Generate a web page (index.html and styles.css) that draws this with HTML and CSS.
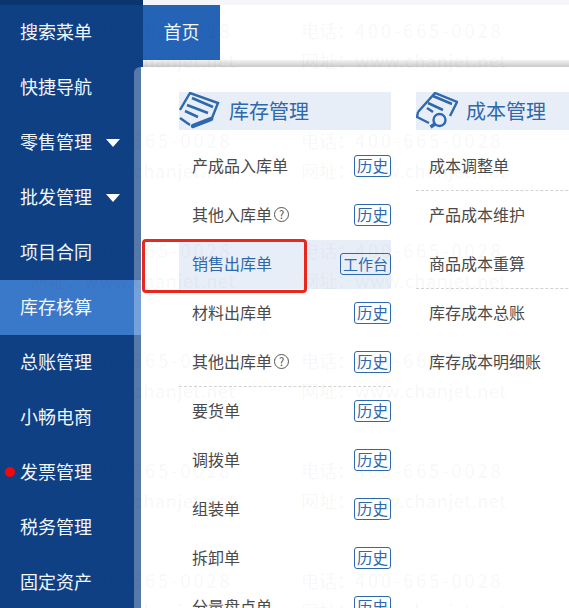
FILE: index.html
```html
<!DOCTYPE html>
<html lang="zh-CN">
<head>
    <meta charset="UTF-8" />
    <title>库存核算</title>
    <link rel="stylesheet" href="styles.css">
</head>
<body>
    <div class="app">
        <aside class="sidebar">
            <div class="nav-item">搜索菜单</div>
            <div class="nav-item">快捷导航</div>
            <div class="nav-item">零售管理<span class="arrow"></span></div>
            <div class="nav-item">批发管理<span class="arrow"></span></div>
            <div class="nav-item">项目合同</div>
            <div class="nav-item active">库存核算</div>
            <div class="nav-item">总账管理</div>
            <div class="nav-item">小畅电商</div>
            <div class="nav-item has-dot">发票管理</div>
            <div class="nav-item">税务管理</div>
            <div class="nav-item">固定资产</div>
        </aside>

        <main class="content">
            <div class="tabs">
                <div class="tab">首页</div>
            </div>
            <div class="tabs-shadow"></div>

            <div class="panel">
                <section class="column">
                    <h2 class="col-title">
                        <svg class="col-icon" width="42" height="38" viewBox="0 0 42 38" fill="none" stroke="#2e68ad" stroke-width="2.4">
                            <path d="M1 18 L11 1 L39 11 L33 26" />
                            <path d="M1 26 L11 33" />
                            <path d="M13 6 L34 15 M8 13 L29 21 M6 19 L19 25" stroke-width="2.6" />
                            <path d="M14 34 L32 27" stroke-width="4.5" stroke-linecap="round" />
                        </svg>
                        库存管理
                    </h2>
                    <div class="row"><span>产成品入库单</span><a class="tag">历史</a></div>
                    <div class="row"><span>其他入库单<i class="help">?</i></span><a class="tag">历史</a></div>
                    <div class="row selected"><span>销售出库单</span><a class="tag">工作台</a></div>
                    <div class="row"><span>材料出库单</span><a class="tag">历史</a></div>
                    <div class="row dashed"><span>其他出库单<i class="help">?</i></span><a class="tag">历史</a></div>
                    <div class="row"><span>要货单</span><a class="tag">历史</a></div>
                    <div class="row"><span>调拨单</span><a class="tag">历史</a></div>
                    <div class="row"><span>组装单</span><a class="tag">历史</a></div>
                    <div class="row"><span>拆卸单</span><a class="tag">历史</a></div>
                    <div class="row"><span>分量盘点单</span><a class="tag">历史</a></div>
                </section>

                <section class="column">
                    <h2 class="col-title">
                        <svg class="col-icon" width="42" height="38" viewBox="0 0 42 38" fill="none" stroke="#2e68ad" stroke-width="2.4">
                            <path d="M2 20 L19 1 L41 10 L34 24" />
                            <path d="M2 20 L1 25 L13 31" />
                            <path d="M17 4 L36 12 M12 11 L27 18 M11 16 L17 20" stroke-width="2.6" />
                            <circle cx="23.5" cy="28" r="6" />
                            <path d="M19 32 L14.5 35" stroke-width="3.5" />
                        </svg>
                        成本管理
                    </h2>
                    <div class="row dashed"><span>成本调整单</span></div>
                    <div class="row"><span>产品成本维护</span></div>
                    <div class="row dashed"><span>商品成本重算</span></div>
                    <div class="row"><span>库存成本总账</span></div>
                    <div class="row"><span>库存成本明细账</span></div>
                </section>
            </div>
        </main>
    </div>

    <!-- annotation box drawn on the screenshot -->
    <div class="callout"></div>

    <div class="watermark">
        <div class="mark"><p>电话&#65306;<b>400-665-0028</b></p><p>网址&#65306;<em>www.chanjet.net</em></p></div>
        <div class="mark"><p>电话&#65306;<b>400-665-0028</b></p><p>网址&#65306;<em>www.chanjet.net</em></p></div>
        <div class="mark"><p>电话&#65306;<b>400-665-0028</b></p><p>网址&#65306;<em>www.chanjet.net</em></p></div>
        <div class="mark"><p>电话&#65306;<b>400-665-0028</b></p><p>网址&#65306;<em>www.chanjet.net</em></p></div>
        <div class="mark"><p>电话&#65306;<b>400-665-0028</b></p><p>网址&#65306;<em>www.chanjet.net</em></p></div>
        <div class="mark"><p>电话&#65306;<b>400-665-0028</b></p><p>网址&#65306;<em>www.chanjet.net</em></p></div>
        <div class="mark"><p>电话&#65306;<b>400-665-0028</b></p><p>网址&#65306;<em>www.chanjet.net</em></p></div>
        <div class="mark"><p>电话&#65306;<b>400-665-0028</b></p><p>网址&#65306;<em>www.chanjet.net</em></p></div>
        <div class="mark"><p>电话&#65306;<b>400-665-0028</b></p><p>网址&#65306;<em>www.chanjet.net</em></p></div>
        <div class="mark"><p>电话&#65306;<b>400-665-0028</b></p><p>网址&#65306;<em>www.chanjet.net</em></p></div>
        <div class="mark"><p>电话&#65306;<b>400-665-0028</b></p><p>网址&#65306;<em>www.chanjet.net</em></p></div>
        <div class="mark"><p>电话&#65306;<b>400-665-0028</b></p><p>网址&#65306;<em>www.chanjet.net</em></p></div>
    </div>
</body>
</html>
```

FILE: styles.css
```css
html, body {
    margin: 0;
    padding: 0;
    height: 608px;
    overflow: hidden;
    background-color: #fff;
    font-family: "Noto Sans CJK SC", "Noto Sans", sans-serif;
    color: #4a4a4a;
}
.app {
    display: flex;
    width: 569px;
    height: 608px;
}

/* left nav */
.sidebar {
    flex: 0 0 143px;
    padding-top: 5px;
    box-sizing: border-box;
    background-color: #0f4084;
    position: relative;
}
.sidebar::before {
    content: "";
    position: absolute;
    top: 0;
    left: 0;
    right: 0;
    height: 5px;
    background-color: #0b356d;
}
.nav-item {
    display: flex;
    align-items: center;
    gap: 14px;
    box-sizing: border-box;
    height: 55px;
    padding: 0 0 3px 20px;
    font-size: 18px;
    color: #f2f7fd;
    position: relative;
}
.nav-item.active {
    background-color: #3a78c9;
}
.has-dot::before {
    content: "";
    position: absolute;
    left: 5px;
    top: 22px;
    width: 10px;
    height: 10px;
    border-radius: 50%;
    background-color: #f5060f;
}
.arrow {
    width: 0;
    height: 0;
    margin-top: 3px;
    border-left: 7px solid transparent;
    border-right: 7px solid transparent;
    border-top: 8px solid #fff;
}

/* right side */
.content {
    flex: 1;
    min-width: 0;
    display: flex;
    flex-direction: column;
    position: relative;
}
.tabs {
    height: 55px;
    border-top: 5px solid #f4f6fb;
    background-color: #fff;
}
.tab {
    width: 77px;
    height: 55px;
    line-height: 52px;
    text-align: center;
    font-size: 18px;
    color: #f2f7fd;
    background-color: #2463b5;
}
.tabs-shadow {
    height: 7px;
    background: linear-gradient(#f3f3f3, #c9c9c9);
}
.panel {
    flex: 1;
    display: flex;
    gap: 25px;
    margin-left: -9px;
    padding: 25px 0 0 38px;
    background-color: #fff;
    background-clip: padding-box;
    border-left: 7px solid rgba(255, 255, 255, 0.3);
    border-top-left-radius: 6px;
    overflow: hidden;
}
.column {
    flex: 0 0 212px;
}
.col-title {
    display: flex;
    align-items: center;
    gap: 8px;
    box-sizing: border-box;
    height: 38px;
    margin: 0 0 12px;
    font-size: 20px;
    font-weight: normal;
    line-height: 36px;
    color: #2e68ad;
    background-color: #e8eef7;
}
.col-icon {
    flex: none;
}
.row {
    display: flex;
    justify-content: space-between;
    align-items: center;
    box-sizing: border-box;
    height: 49px;
    padding-left: 13px;
    font-size: 16px;
    border-bottom: 1px solid transparent;
}
.row span {
    display: flex;
    align-items: center;
    line-height: 20px;
    padding-bottom: 2px;
}
.row.selected {
    background-color: #e8eef7;
    color: #2e68ad;
}
.row.dashed {
    border-bottom: 1px dashed #d2d2d2;
}
.help {
    display: inline-block;
    box-sizing: border-box;
    width: 15px;
    height: 15px;
    margin-left: 2px;
    border: 1px solid #555;
    border-radius: 50%;
    font-size: 11px;
    font-style: normal;
    line-height: 13px;
    text-align: center;
}
.tag {
    box-sizing: border-box;
    height: 22px;
    line-height: 19px;
    padding: 0 2px;
    border: 1px solid #2e68ad;
    border-radius: 3px;
    font-size: 15.5px;
    color: #2e68ad;
}
.selected .tag {
    font-size: 15px;
}

/* red annotation */
.callout {
    position: absolute;
    left: 142px;
    top: 239px;
    width: 159px;
    height: 48px;
    border: 3px solid #e8281c;
    border-radius: 4px;
}

/* faint watermark over everything */
.watermark {
    position: absolute;
    top: 0;
    left: 0;
    width: 569px;
    height: 608px;
    overflow: hidden;
    pointer-events: none;
    display: grid;
    grid-template-columns: repeat(2, 271px);
    grid-auto-rows: 110px;
    padding: 19px 0 0 30px;
    box-sizing: border-box;
    color: rgba(40, 50, 70, 0.055);
    font-family: "Noto Sans CJK SC", sans-serif;
    font-size: 18px;
}
.mark p {
    margin: 0 0 8px;
    height: 22px;
    line-height: 22px;
    white-space: nowrap;
}
.mark b {
    font-weight: normal;
    letter-spacing: 3px;
}
.mark em {
    font-style: normal;
    letter-spacing: 0.6px;
}
```
